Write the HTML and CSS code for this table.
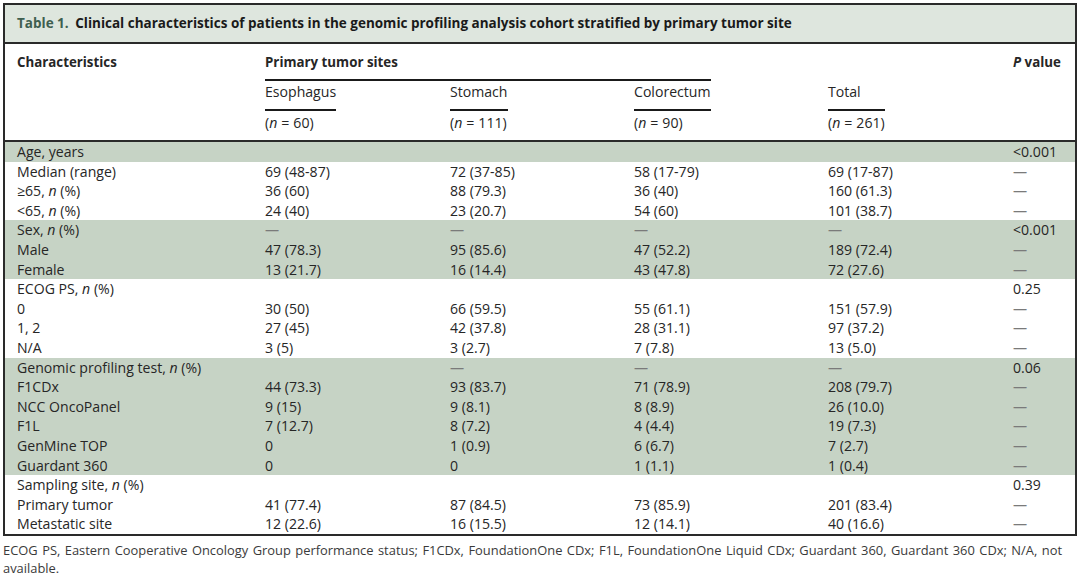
FILE: index.html
```html
<!DOCTYPE html>
<html lang="en">
<head>
<meta charset="utf-8">
<title>Table 1</title>
<link rel="stylesheet" href="styles.css">
</head>
<body>
<div class="page">
  <div class="tbl">
    <div class="caption"><span class="lbl">Table 1.</span> Clinical characteristics of patients in the genomic profiling analysis cohort stratified by primary tumor site</div>
    <table>
      <colgroup>
        <col class="c1"><col class="c2"><col class="c3"><col class="c4"><col class="c5"><col class="c6">
      </colgroup>
      <thead>
        <tr class="ha">
          <th class="first">Characteristics</th>
          <th colspan="3"><div class="grp">Primary tumor sites</div></th>
          <th></th>
          <th><i>P</i> value</th>
        </tr>
        <tr class="hb">
          <th class="first"></th>
          <th><div class="stack"><div class="nm">Esophagus</div><div class="nn">(<i>n</i><span class="eq">=</span>60)</div></div></th>
          <th><div class="stack"><div class="nm">Stomach</div><div class="nn">(<i>n</i><span class="eq">=</span>111)</div></div></th>
          <th><div class="stack"><div class="nm">Colorectum</div><div class="nn">(<i>n</i><span class="eq">=</span>90)</div></div></th>
          <th><div class="stack"><div class="nm">Total</div><div class="nn">(<i>n</i><span class="eq">=</span>261)</div></div></th>
          <th></th>
        </tr>
      </thead>
      <tbody>
        <tr class="sh"><td class="first">Age, years</td><td></td><td></td><td></td><td></td><td>&lt;0.001</td></tr>
        <tr><td class="first">Median (range)</td><td>69 (48-87)</td><td>72 (37-85)</td><td>58 (17-79)</td><td>69 (17-87)</td><td class="d">—</td></tr>
        <tr><td class="first">≥65, <i>n</i> (%)</td><td>36 (60)</td><td>88 (79.3)</td><td>36 (40)</td><td>160 (61.3)</td><td class="d">—</td></tr>
        <tr><td class="first">&lt;65, <i>n</i> (%)</td><td>24 (40)</td><td>23 (20.7)</td><td>54 (60)</td><td>101 (38.7)</td><td class="d">—</td></tr>
        <tr class="sh"><td class="first">Sex, <i>n</i> (%)</td><td class="d">—</td><td class="d">—</td><td class="d">—</td><td class="d">—</td><td>&lt;0.001</td></tr>
        <tr class="sh"><td class="first">Male</td><td>47 (78.3)</td><td>95 (85.6)</td><td>47 (52.2)</td><td>189 (72.4)</td><td class="d">—</td></tr>
        <tr class="sh"><td class="first">Female</td><td>13 (21.7)</td><td>16 (14.4)</td><td>43 (47.8)</td><td>72 (27.6)</td><td class="d">—</td></tr>
        <tr><td class="first">ECOG PS, <i>n</i> (%)</td><td></td><td></td><td></td><td></td><td>0.25</td></tr>
        <tr><td class="first">0</td><td>30 (50)</td><td>66 (59.5)</td><td>55 (61.1)</td><td>151 (57.9)</td><td class="d">—</td></tr>
        <tr><td class="first">1, 2</td><td>27 (45)</td><td>42 (37.8)</td><td>28 (31.1)</td><td>97 (37.2)</td><td class="d">—</td></tr>
        <tr><td class="first">N/A</td><td>3 (5)</td><td>3 (2.7)</td><td>7 (7.8)</td><td>13 (5.0)</td><td class="d">—</td></tr>
        <tr class="sh"><td class="first">Genomic profiling test, <i>n</i> (%)</td><td></td><td class="d">—</td><td class="d">—</td><td class="d">—</td><td>0.06</td></tr>
        <tr class="sh"><td class="first">F1CDx</td><td>44 (73.3)</td><td>93 (83.7)</td><td>71 (78.9)</td><td>208 (79.7)</td><td class="d">—</td></tr>
        <tr class="sh"><td class="first">NCC OncoPanel</td><td>9 (15)</td><td>9 (8.1)</td><td>8 (8.9)</td><td>26 (10.0)</td><td class="d">—</td></tr>
        <tr class="sh"><td class="first">F1L</td><td>7 (12.7)</td><td>8 (7.2)</td><td>4 (4.4)</td><td>19 (7.3)</td><td class="d">—</td></tr>
        <tr class="sh"><td class="first">GenMine TOP</td><td>0</td><td>1 (0.9)</td><td>6 (6.7)</td><td>7 (2.7)</td><td class="d">—</td></tr>
        <tr class="sh"><td class="first">Guardant 360</td><td>0</td><td>0</td><td>1 (1.1)</td><td>1 (0.4)</td><td class="d">—</td></tr>
        <tr><td class="first">Sampling site, <i>n</i> (%)</td><td></td><td></td><td></td><td></td><td>0.39</td></tr>
        <tr><td class="first">Primary tumor</td><td>41 (77.4)</td><td>87 (84.5)</td><td>73 (85.9)</td><td>201 (83.4)</td><td class="d">—</td></tr>
        <tr><td class="first">Metastatic site</td><td>12 (22.6)</td><td>16 (15.5)</td><td>12 (14.1)</td><td>40 (16.6)</td><td class="d">—</td></tr>
      </tbody>
    </table>
  </div>
  <p class="note">ECOG PS, Eastern Cooperative Oncology Group performance status; F1CDx, FoundationOne CDx; F1L, FoundationOne Liquid CDx; Guardant 360, Guardant 360 CDx; N/A, not available.</p>
</div>
</body>
</html>
```

FILE: styles.css
```css
html, body {
  margin: 0;
  padding: 0;
  background: #ffffff;
}
body {
  font-family: "Open Sans", Lato, sans-serif;
  color: #262626;
}
.page {
  padding: 3px 3px 0 3px;
}
.tbl {
  width: 1070px;
  border: 2px solid #2a2a2a;
}
.caption {
  height: 37px;
  line-height: 37px;
  padding-left: 12px;
  background: #dee6de;
  border-bottom: 2px solid #2a2a2a;
  font-size: 13.5px;
  font-weight: 700;
  color: #1a1a1a;
}
.caption .lbl {
  color: #3f5f50;
  margin-right: 3px;
}
table {
  width: 1070px;
  border-collapse: collapse;
  table-layout: fixed;
  font-size: 14.1px;
}
col.c1 { width: 260px; }
col.c2 { width: 185px; }
col.c3 { width: 184px; }
col.c4 { width: 194px; }
col.c5 { width: 185px; }
col.c6 { width: 62px; }
th, td {
  padding: 0;
  text-align: left;
  vertical-align: top;
  white-space: nowrap;
}
th {
  font-weight: 400;
}
.first {
  padding-left: 12px;
}
thead tr.ha th {
  padding-top: 9px;
  line-height: 18px;
  height: 26px;
  font-weight: 700;
  font-size: 13.3px;
}
.grp {
  margin-right: 117px;
  padding-bottom: 8px;
  border-bottom: 2px solid #1a1a1a;
}
thead tr.hb th {
  padding-top: 2px;
  line-height: 18px;
}
thead tr.hb {
  border-bottom: 2px solid #2a2a2a;
}
.stack {
  display: inline-block;
}
.nm {
  padding-bottom: 8px;
  border-bottom: 2px solid #1a1a1a;
}
.nn {
  padding-top: 3px;
  padding-bottom: 8px;
}
.eq {
  margin: 0 4px;
}
tbody td {
  height: 19.6px;
  line-height: 19.6px;
}
tr.sh td {
  background: #c6d3c5;
}
td.d {
  color: #7a7a7a;
}
.note {
  margin: 5px 0 0 0;
  width: 1059px;
  font-size: 12.9px;
  line-height: 18px;
  color: #3a3a3a;
  text-align: justify;
}
```
